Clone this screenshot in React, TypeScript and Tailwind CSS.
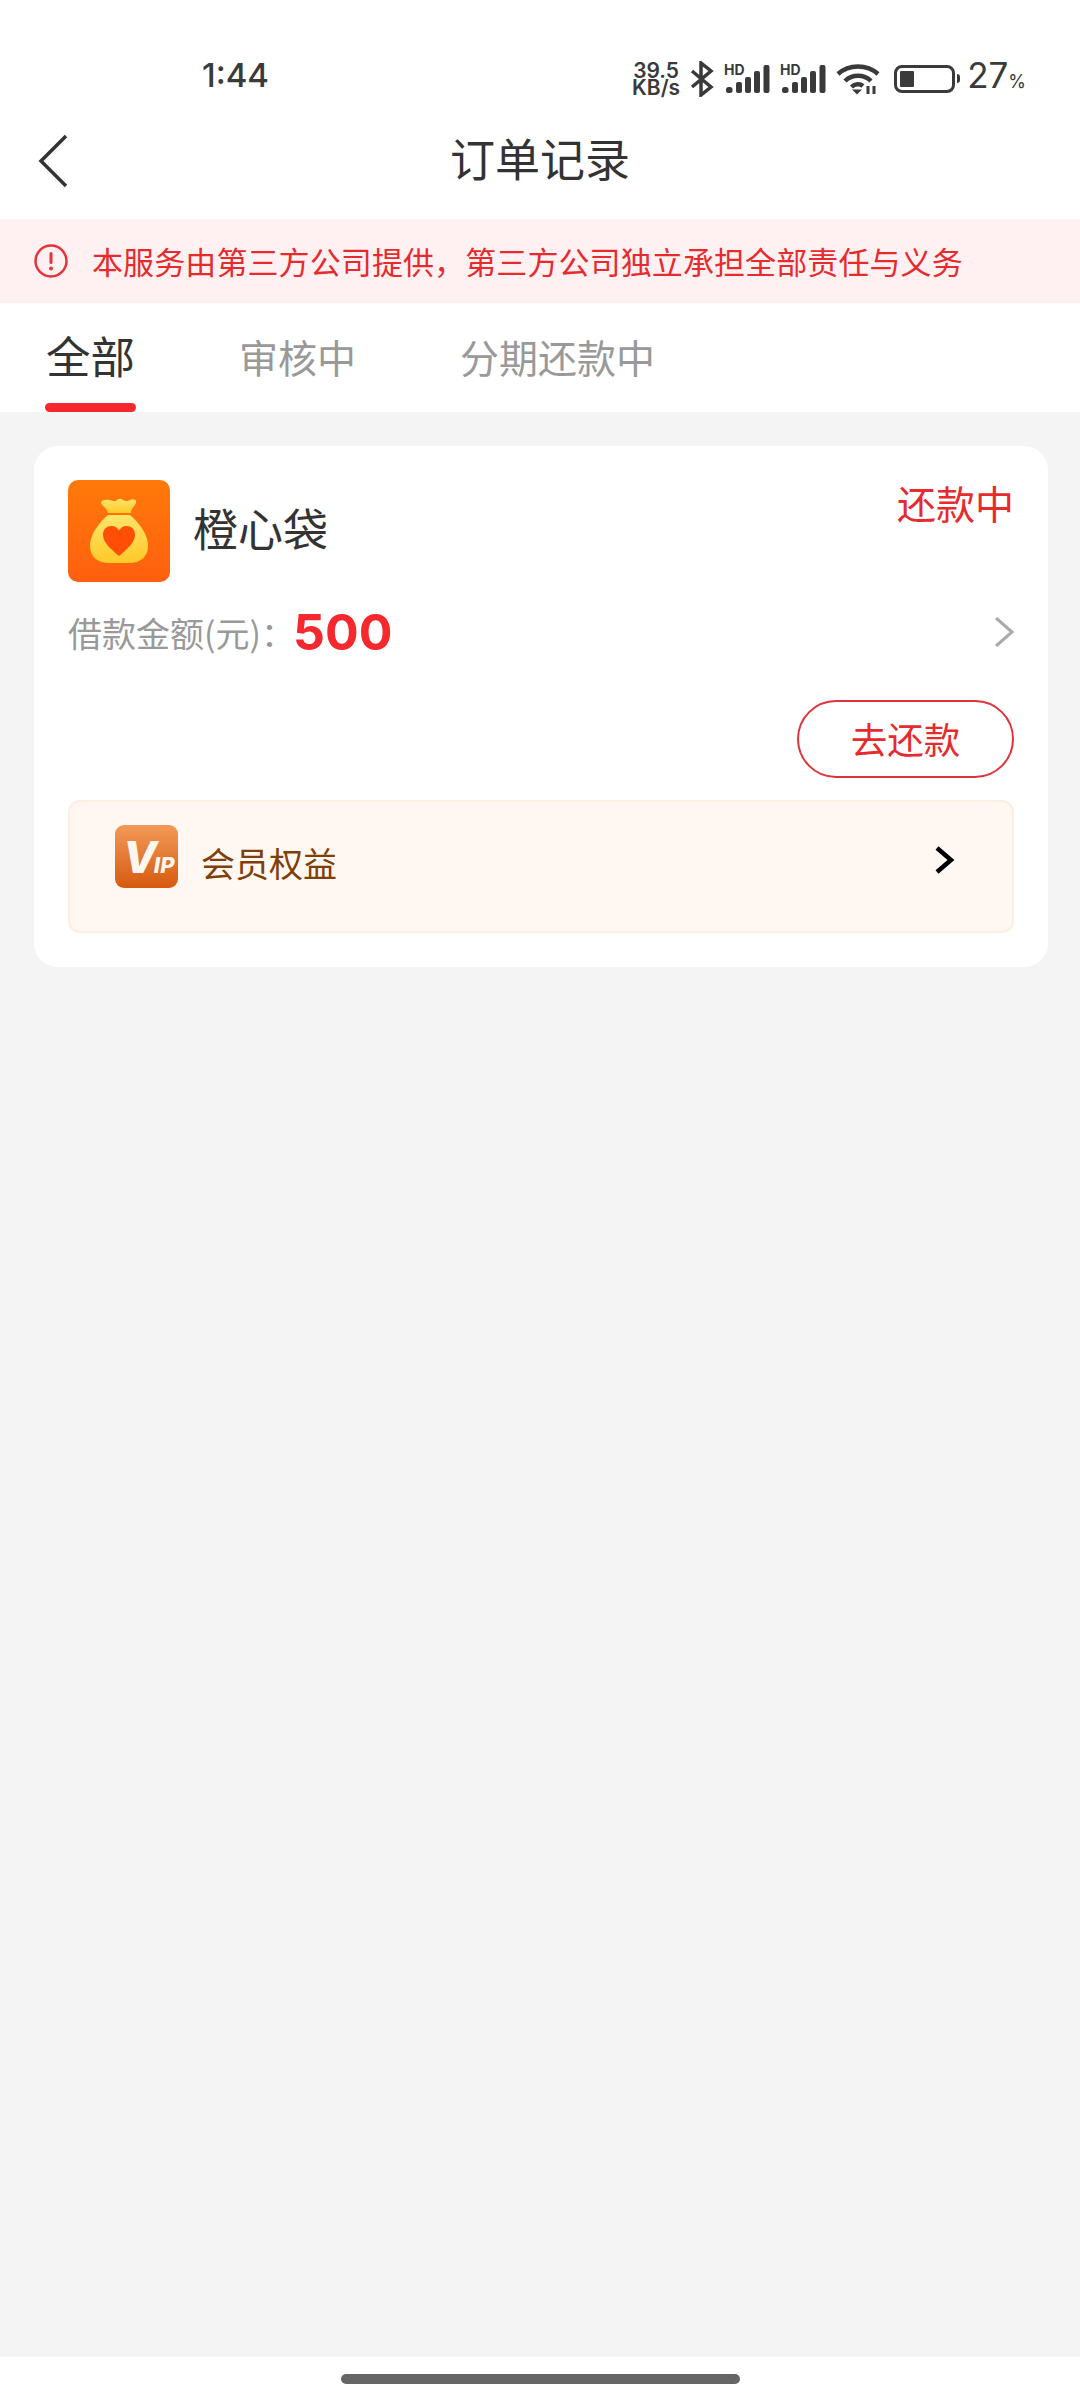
import React from "react";

const cjk = "font-['Noto_Sans_CJK_SC','Noto_Sans',sans-serif]";

const Signal = () => (
  <svg width="46" height="34" viewBox="0 -4 46 34" className="mb-[4px] shrink-0">
    <text x="0" y="11" fontFamily="Inter, sans-serif" fontWeight="700" fontSize="14" fill="#3a3a3a">
      HD
    </text>
    <rect x="2" y="23" width="6.500" height="6" rx="2.500" fill="#3a3a3a" />
    <rect x="12" y="18" width="6" height="11" rx="2" fill="#3a3a3a" />
    <rect x="21" y="13" width="6" height="16" rx="2" fill="#3a3a3a" />
    <rect x="30" y="7" width="6" height="22" rx="2" fill="#3a3a3a" />
    <rect x="39.500" y="1" width="6" height="28" rx="2" fill="#3a3a3a" />
  </svg>
);

const Wifi = () => (
  <svg width="44" height="32" viewBox="0 0 44 32" fill="none" stroke="#3a3a3a" strokeWidth="4.500" className="shrink-0">
    <path d="M2 11C13 1 31 1 42 11" />
    <path d="M9 18C16 11 28 11 35 18" />
    <path d="M15.500 24C19 20.500 24 20.500 27 23" />
    <path d="M16 26.500L21 31.500L26 26.500Z" fill="#3a3a3a" stroke="none" />
    <path d="M32 23V31M38 23V31" strokeWidth="3" />
  </svg>
);

const BagIcon = () => (
  <svg width="102" height="102" viewBox="0 0 102 102" className="shrink-0 rounded-[10px]">
    <defs>
      <linearGradient id="bag-bg" x1="0" y1="0" x2="0" y2="1">
        <stop offset="0" stopColor="#ff7a0a" />
        <stop offset="1" stopColor="#ff5f0f" />
      </linearGradient>
      <linearGradient id="bag-fill" x1="0" y1="0" x2="0" y2="1">
        <stop offset="0" stopColor="#ffe56a" />
        <stop offset="1" stopColor="#ffc928" />
      </linearGradient>
    </defs>
    <rect width="102" height="102" fill="url(#bag-bg)" />
    <path
      d="M33 23C33 20 38 19 42 20C45 21 47 22 49 20C51 18.500 53 18 55 20C58 22 60 21 63 19.500C66 18.500 69 20 68 23C67 26 63 28 63 33H40C39 28 34 26 33 23Z"
      fill="url(#bag-fill)"
    />
    <path
      d="M40 35H62C69 41 80 53 80 66C80 77 72 83 61 83H41C30 83 22 77 22 66C22 53 33 41 40 35Z"
      fill="url(#bag-fill)"
    />
    <path
      d="M51 76C44 70 35 63 35 55C35 49 39 46 43.500 46C47 46 49.500 48 51 50.500C52.500 48 55 46 58.500 46C63 46 67 49 67 55C67 63 58 70 51 76Z"
      fill="#ff4f06"
    />
  </svg>
);

const VipIcon = () => (
  <svg width="63" height="63" viewBox="0 0 63 63" className="shrink-0 rounded-[9px]">
    <defs>
      <linearGradient id="vip-bg" x1="0" y1="0" x2="0" y2="1">
        <stop offset="0" stopColor="#f29a58" />
        <stop offset="1" stopColor="#d65a10" />
      </linearGradient>
    </defs>
    <rect width="63" height="63" fill="url(#vip-bg)" />
    <text x="8" y="48" fontFamily="Inter, sans-serif" fontWeight="800" fontStyle="italic" fill="#fff7ef">
      <tspan fontSize="44">V</tspan>
      <tspan fontSize="22" dx="-3">
        IP
      </tspan>
    </text>
  </svg>
);

export default function App() {
  return (
    <div className={`flex h-[2400px] w-[1080px] flex-col bg-[#f4f4f4] text-[#333] ${cjk}`}>
      {/* status bar */}
      <div className="flex h-[110px] items-start bg-white pt-[55px] pl-[202px] pr-[54px] text-[#3a3a3a]">
        <span className="font-['Inter',sans-serif] text-[33px] font-medium leading-[40px]">1:44</span>
        <div className="ml-auto flex items-center gap-[10px]">
          <span className="text-center font-['Inter',sans-serif] text-[21px] font-semibold leading-[17px]">
            39.5
            <br />
            KB/s
          </span>
          <svg width="24" height="36" viewBox="0 0 24 36" fill="none" stroke="#3a3a3a" strokeWidth="3.500" className="shrink-0">
            <path d="M2 10L21 26L11 34V2L21 10L2 26" />
          </svg>
          <Signal />
          <Signal />
          <Wifi />
          <div className="ml-[4px] mr-[-3px] flex shrink-0 items-center gap-[2px]">
            <div className="flex h-[28px] w-[61px] items-center rounded-[8px] border-[3px] border-[#3a3a3a] px-[3px]">
              <div className="h-[16px] w-[14px] rounded-[1px] bg-[#3a3a3a]" />
            </div>
            <div className="h-[9px] w-[3px] rounded-r-full bg-[#3a3a3a]" />
          </div>
          <span className="flex items-baseline font-['Inter',sans-serif] leading-[40px]">
            <span className="text-[35px]">27</span>
            <span className="text-[18px]">%</span>
          </span>
        </div>
      </div>

      {/* header */}
      <div className="relative flex h-[109px] items-center justify-center bg-white pb-[14px]">
        <svg width="30" height="54" viewBox="0 0 30 54" fill="none" stroke="#333" strokeWidth="3.500" className="absolute left-[38px] top-[24px]">
          <path d="M28 2L3 27L28 52" />
        </svg>
        <span className="text-[45px] leading-[60px] text-[#333]">订单记录</span>
      </div>

      {/* notice */}
      <div className="flex h-[84px] items-center gap-[24px] bg-[#fff1f1] pl-[34px] text-[31px] tracking-[0.1px] text-[#e62a2e]">
        <svg width="34" height="34" viewBox="0 0 34 34" fill="none" className="shrink-0">
          <circle cx="17" cy="17" r="15.500" stroke="#e8323a" strokeWidth="2.500" />
          <rect x="15.500" y="8" width="3" height="12" rx="1.500" fill="#e8323a" />
          <circle cx="17" cy="24.500" r="2" fill="#e8323a" />
        </svg>
        <span>本服务由第三方公司提供，第三方公司独立承担全部责任与义务</span>
      </div>

      {/* tabs */}
      <div className="flex h-[109px] items-start bg-white pl-[45px] text-[39px] text-[#999]">
        <div className="flex h-full w-[91px] flex-col items-center">
          <span className="mt-[22px] text-[44.500px] leading-[60px] text-[#333]">全部</span>
          <div className="mt-auto h-[9px] w-full rounded-full bg-[#f5282d]" />
        </div>
        <span className="ml-[103px] mt-[25px] leading-[56px]">审核中</span>
        <span className="ml-[104px] mt-[25px] leading-[56px]">分期还款中</span>
      </div>

      {/* order card */}
      <div className="ml-[34px] mr-[32px] mt-[34px] flex h-[521px] flex-col rounded-[24px] bg-white px-[34px] pt-[34px]">
        <div className="flex items-start">
          <BagIcon />
          <span className="ml-[23px] mt-[18px] text-[45px] leading-[60px] text-[#333]">橙心袋</span>
          <span className="ml-auto mt-[-5px] text-[39px] leading-[54px] text-[#e62a2e]">还款中</span>
        </div>
        <div className="mt-[17px] flex h-[66px] items-center">
          <span className="text-[34px] text-[#999]">借款金额(元)：</span>
          <span className="ml-[-2px] font-['Inter',sans-serif] text-[50px] font-bold text-[#f5282d]">500</span>
          <svg width="20" height="32" viewBox="0 0 20 32" fill="none" stroke="#aaa" strokeWidth="3" className="ml-auto">
            <path d="M2 2L18 16L2 30" />
          </svg>
        </div>
        <div className="mt-[35px] flex justify-end">
          <div className="flex h-[78px] w-[217px] items-center justify-center rounded-full border-2 border-[#e0323a] text-[36.500px] text-[#e62a2e]">
            去还款
          </div>
        </div>
        <div className="mt-[22px] flex h-[133px] items-start rounded-[12px] border-2 border-[#fbeee2] bg-[#fff7f1] pl-[45px] pr-[56px] pt-[23px]">
          <VipIcon />
          <span className="ml-[23px] mt-[15px] text-[34px] leading-[46px] text-[#7f3f08]">会员权益</span>
          <svg width="22" height="30" viewBox="0 0 22 30" fill="none" stroke="#000" strokeWidth="4.500" className="ml-auto mt-[20px]">
            <path d="M3 3L17 15L3 27" />
          </svg>
        </div>
      </div>

      {/* home indicator */}
      <div className="mt-auto flex h-[43px] items-start justify-center bg-white pt-[17px]">
        <div className="h-[10px] w-[399px] rounded-full bg-[#666]" />
      </div>
    </div>
  );
}
